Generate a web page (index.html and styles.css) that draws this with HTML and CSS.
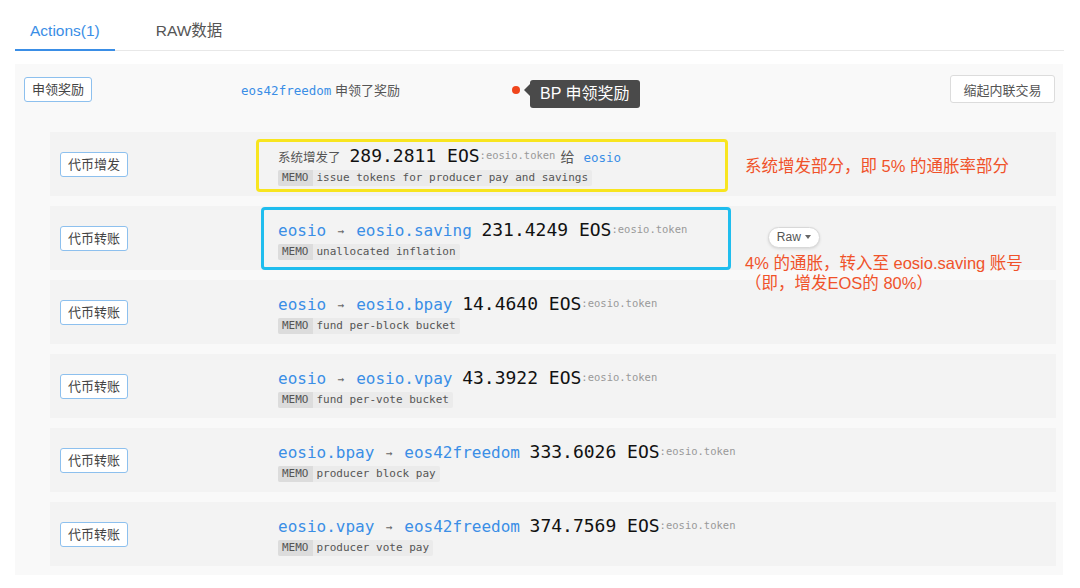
FILE: index.html
```html
<!DOCTYPE html>
<html lang="zh-CN">
<head>
<meta charset="utf-8">
<title>Actions</title>
<link rel="stylesheet" href="styles.css">
</head>
<body>
<div class="page">
  <div class="tabs">
    <div class="tab active">Actions(1)</div>
    <div class="tab">RAW数据</div>
  </div>

  <div class="panel">
    <div class="top-row">
      <div class="tag-col"><span class="tag">申领奖励</span></div>
      <div class="top-desc"><span class="acct small">eos42freedom</span> 申领了奖励</div>
      <button class="collapse">缩起内联交易</button>
    </div>

    <div class="list">
      <div class="row">
        <div class="tag-col wide"><span class="tag">代币增发</span></div>
        <div class="content">
          <div class="line"><span class="label">系统增发了</span><span class="amount">289.2811 EOS</span><span class="token">:eosio.token</span><span class="label give">给</span><span class="acct small">eosio</span></div>
          <div class="memo"><span class="memo-tag">MEMO</span><span class="memo-text">issue tokens for producer pay and savings</span></div>
        </div>
      </div>

      <div class="row">
        <div class="tag-col wide"><span class="tag">代币转账</span></div>
        <div class="content">
          <div class="line"><span class="acct">eosio</span><span class="arrow">→</span><span class="acct">eosio.saving</span> <span class="amount">231.4249 EOS</span><span class="token">:eosio.token</span></div>
          <div class="memo"><span class="memo-tag">MEMO</span><span class="memo-text">unallocated inflation</span></div>
        </div>
      </div>

      <div class="row">
        <div class="tag-col wide"><span class="tag">代币转账</span></div>
        <div class="content">
          <div class="line"><span class="acct">eosio</span><span class="arrow">→</span><span class="acct">eosio.bpay</span> <span class="amount">14.4640 EOS</span><span class="token">:eosio.token</span></div>
          <div class="memo"><span class="memo-tag">MEMO</span><span class="memo-text">fund per-block bucket</span></div>
        </div>
      </div>

      <div class="row">
        <div class="tag-col wide"><span class="tag">代币转账</span></div>
        <div class="content">
          <div class="line"><span class="acct">eosio</span><span class="arrow">→</span><span class="acct">eosio.vpay</span> <span class="amount">43.3922 EOS</span><span class="token">:eosio.token</span></div>
          <div class="memo"><span class="memo-tag">MEMO</span><span class="memo-text">fund per-vote bucket</span></div>
        </div>
      </div>

      <div class="row">
        <div class="tag-col wide"><span class="tag">代币转账</span></div>
        <div class="content">
          <div class="line"><span class="acct">eosio.bpay</span><span class="arrow">→</span><span class="acct">eos42freedom</span> <span class="amount">333.6026 EOS</span><span class="token">:eosio.token</span></div>
          <div class="memo"><span class="memo-tag">MEMO</span><span class="memo-text">producer block pay</span></div>
        </div>
      </div>

      <div class="row">
        <div class="tag-col wide"><span class="tag">代币转账</span></div>
        <div class="content">
          <div class="line"><span class="acct">eosio.vpay</span><span class="arrow">→</span><span class="acct">eos42freedom</span> <span class="amount">374.7569 EOS</span><span class="token">:eosio.token</span></div>
          <div class="memo"><span class="memo-tag">MEMO</span><span class="memo-text">producer vote pay</span></div>
        </div>
      </div>
    </div>
  </div>

  <!-- overlays -->
  <span class="dot"></span>
  <div class="tip">BP 申领奖励</div>
  <div class="hl hl-yellow"></div>
  <div class="hl hl-blue"></div>
  <div class="note note-1">系统增发部分，即 5% 的通胀率部分</div>
  <div class="raw-pill">Raw <span class="caret"></span></div>
  <div class="note note-2">4% 的通胀，转入至 eosio.saving 账号<br>（即，增发EOS的 80%）</div>
</div>
</body>
</html>
```

FILE: styles.css
```css
* { box-sizing: border-box; }

html, body {
  margin: 0;
  padding: 0;
  background: #ffffff;
}

body {
  font-family: "Liberation Sans", "Noto Sans CJK SC", sans-serif;
  color: #333;
}

.page {
  position: relative;
  width: 1080px;
  height: 588px;
  overflow: hidden;
}

/* ---------- tabs ---------- */
.tabs {
  display: flex;
  gap: 26px;
  height: 51px;
  margin: 0 16px 0 15px;
  border-bottom: 1px solid #e8e8e8;
}

.tab {
  position: relative;
  height: 50px;
  padding: 21px 15px 0;
  line-height: 20px;
  font-size: 15.5px;
  color: #555;
}

.tab.active {
  color: #3a8ee6;
}

.tab.active::after {
  content: "";
  position: absolute;
  left: 0;
  right: 0;
  bottom: -1px;
  height: 2px;
  background: #3a8ee6;
}

/* ---------- panel ---------- */
.panel {
  margin: 13px 17px 0 15px;
  background: #f9f9f9;
  padding-bottom: 9px;
}

.top-row {
  display: flex;
  align-items: center;
  height: 50px;
  padding: 0 8px 0 9px;
}

.tag-col {
  width: 217px;
  flex: none;
}

.tag-col.wide {
  width: 218px;
}

.tag {
  display: inline-block;
  height: 25px;
  line-height: 23px;
  padding: 0 7px;
  border: 1px solid #8dc0ee;
  border-radius: 3px;
  background: #ffffff;
  font-size: 13px;
  color: #444;
  vertical-align: middle;
}

.top-desc {
  font-size: 13px;
  color: #555;
}

.collapse {
  margin-left: auto;
  height: 28px;
  width: 105px;
  padding: 0;
  border: 1px solid #dcdcdc;
  border-radius: 3px;
  background: #ffffff;
  font-family: "Liberation Sans", "Noto Sans CJK SC", sans-serif;
  font-size: 13px;
  color: #555;
}

/* ---------- rows ---------- */
.list {
  display: flex;
  flex-direction: column;
  gap: 10px;
  margin: 18px 7px 0 35px;
}

.row {
  display: flex;
  align-items: center;
  height: 64px;
  padding-left: 10px;
  background: #f3f3f3;
}

.content {
  display: flex;
  flex-direction: column;
  align-items: flex-start;
}

.line {
  height: 24px;
  line-height: 24px;
  white-space: nowrap;
  font-family: "DejaVu Sans Mono", "Liberation Mono", monospace;
  font-size: 16px;
}

.acct {
  color: #3a8ee6;
  font-family: "DejaVu Sans Mono", "Liberation Mono", monospace;
  font-size: 16px;
}

.acct.small {
  font-size: 12.5px;
}

.arrow {
  display: inline-block;
  width: 30px;
  text-align: center;
  font-size: 11px;
  color: #666;
  vertical-align: 1px;
}

.amount {
  font-family: "DejaVu Sans Mono", "Liberation Mono", monospace;
  font-size: 18px;
  color: #111;
}

.token {
  font-family: "DejaVu Sans Mono", "Liberation Mono", monospace;
  font-size: 10.5px;
  color: #999;
  vertical-align: 3px;
}

.label {
  font-family: "Liberation Sans", "Noto Sans CJK SC", sans-serif;
  font-size: 12.5px;
  color: #555;
  margin-right: 9px;
}

.label.give {
  font-size: 14px;
  margin: 0 9px 0 5px;
}

.memo {
  display: flex;
  margin-top: 3px;
  height: 16px;
  line-height: 16px;
  background: #ebebeb;
  border-radius: 2px;
  font-family: "DejaVu Sans Mono", "Liberation Mono", monospace;
  font-size: 11px;
  color: #555;
  white-space: nowrap;
}

.memo-tag {
  padding: 0 4px;
  background: #dcdcdc;
  border-radius: 2px 0 0 2px;
  color: #555;
}

.memo-text {
  padding: 0 4px;
}

/* ---------- overlays ---------- */
.dot {
  position: absolute;
  left: 512px;
  top: 86px;
  width: 8px;
  height: 8px;
  border-radius: 50%;
  background: #f0461c;
}

.tip {
  position: absolute;
  left: 530px;
  top: 80px;
  width: 110px;
  height: 28px;
  line-height: 28px;
  padding-left: 10px;
  border-radius: 3px;
  background: #4a4a4a;
  color: #ffffff;
  font-size: 16px;
  white-space: nowrap;
}

.tip::before {
  content: "";
  position: absolute;
  left: -6px;
  top: 4px;
  border-top: 6px solid transparent;
  border-bottom: 6px solid transparent;
  border-right: 6px solid #4a4a4a;
}

.hl {
  position: absolute;
  border-width: 3px;
  border-style: solid;
  border-radius: 4px;
}

.hl-yellow {
  left: 256px;
  top: 139px;
  width: 472px;
  height: 53px;
  border-color: #f8e51f;
}

.hl-blue {
  left: 261px;
  top: 207px;
  width: 470px;
  height: 63px;
  border-color: #1fbdee;
}

.note {
  position: absolute;
  left: 745px;
  font-size: 16.5px;
  line-height: 20px;
  color: #f0522a;
  white-space: nowrap;
}

.note-1 {
  top: 156px;
}

.note-2 {
  top: 253px;
}

.raw-pill {
  position: absolute;
  left: 768px;
  top: 227px;
  width: 52px;
  height: 21px;
  line-height: 19px;
  border: 1px solid #d8d8d8;
  border-radius: 11px;
  background: #ffffff;
  box-shadow: 0 1px 3px rgba(0, 0, 0, 0.12);
  font-size: 12px;
  color: #555;
  text-align: center;
}

.caret {
  display: inline-block;
  width: 0;
  height: 0;
  margin-left: 1px;
  border-left: 3px solid transparent;
  border-right: 3px solid transparent;
  border-top: 4px solid #666;
  vertical-align: 2px;
}
```
